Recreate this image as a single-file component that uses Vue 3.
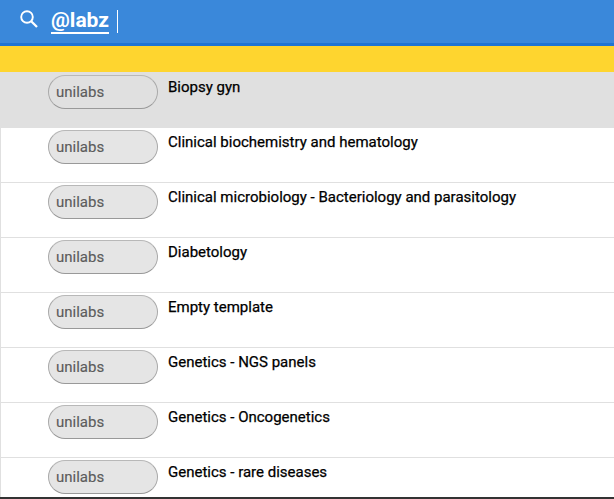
<template>
  <div class="page">
    <header class="search-bar">
      <svg class="search-icon" width="18" height="18" viewBox="0 0 18 18" fill="none" stroke="#fff">
        <circle cx="7" cy="7" r="5.8" stroke-width="1.9" />
        <path d="M11.2 11.2 L17 17" stroke-width="2.3" />
      </svg>
      <span class="query">@labz</span>
      <span class="caret"></span>
    </header>
    <div class="notice"></div>
    <ul class="list">
      <li v-for="(item, i) in items" :key="item" class="row" :class="{ active: i === 0 }">
        <span class="pill">unilabs</span>
        <span class="title">{{ item }}</span>
      </li>
    </ul>
  </div>
</template>

<script setup>
const items = [
  'Biopsy gyn',
  'Clinical biochemistry and hematology',
  'Clinical microbiology - Bacteriology and parasitology',
  'Diabetology',
  'Empty template',
  'Genetics - NGS panels',
  'Genetics - Oncogenetics',
  'Genetics - rare diseases'
]
</script>

<style>
html,
body {
  margin: 0;
  overflow: hidden;
  background: #fff;
}
</style>

<style scoped>
.page {
  height: 499px;
  box-sizing: border-box;
  overflow: hidden;
  font-family: Roboto, "Liberation Sans", sans-serif;
  border-bottom: 2px solid #333;
}

.search-bar {
  height: 46px;
  box-sizing: border-box;
  display: flex;
  align-items: center;
  background: #3a88da;
  border-bottom: 3px solid #1f74d2;
  padding-left: 20px;
  color: #fff;
}

.search-icon {
  margin-right: 13px;
  margin-top: -5px;
}

.query {
  font-size: 21px;
  font-weight: 700;
  line-height: 24px;
  border-bottom: 2px solid #fff;
  margin-top: -2px;
}

.caret {
  width: 1px;
  height: 23px;
  background: #fff;
  margin-left: 8px;
  margin-top: -1px;
}

.notice {
  height: 26px;
  background: #fed52f;
}

.list {
  list-style: none;
  margin: 0;
  padding: 0;
  border-left: 1px solid #e0e0e0;
}

.row {
  height: 55px;
  box-sizing: border-box;
  display: flex;
  align-items: flex-start;
  padding: 2px 0 0 47px;
  border-bottom: 1px solid #e0e0e0;
  background: #fff;
}

.row.active {
  height: 56px;
  padding-top: 3px;
  background: #e0e0e0;
}

.pill {
  width: 110px;
  height: 34px;
  box-sizing: border-box;
  display: flex;
  align-items: center;
  padding-left: 7px;
  border: 1px solid;
  border-color: #b8b8b8 #a8a8a8 #999;
  border-radius: 17px;
  background: #e5e5e5;
  color: #5c5c5c;
  font-size: 15px;
  -webkit-text-stroke: 0.15px #5c5c5c;
}

.row.active .pill {
  background: #e0e0e0;
}

.title {
  margin-left: 10px;
  margin-top: 2px;
  font-size: 15px;
  line-height: 20px;
  color: #000;
  -webkit-text-stroke: 0.25px #000;
}
</style>
